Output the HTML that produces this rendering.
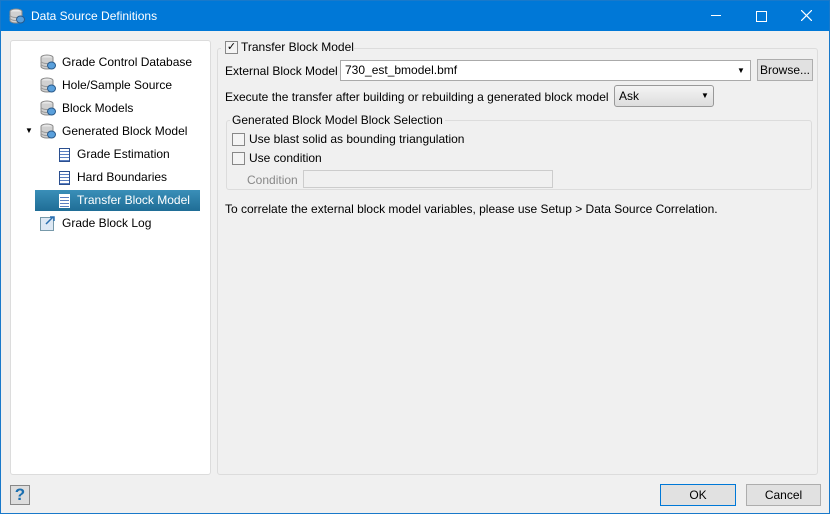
<!DOCTYPE html><html><head><style>
body{margin:0;width:830px;height:514px;overflow:hidden;font-family:"Liberation Sans",sans-serif;font-size:12px;color:#000}
.win{position:absolute;left:0;top:0;width:828px;height:512px;border:1px solid #1979ca;background:#f0f0f0}
.title{position:absolute;left:0;top:0;width:828px;height:30px;background:#0078d7;color:#fff;font-size:12px}
.abs{position:absolute}
.cb{position:absolute;width:11px;height:11px;border:1px solid #888;background:#f4f4f4}
.item{position:absolute;height:20px;line-height:20px;white-space:nowrap}
.doc{position:absolute;width:9px;height:12px;border:1px solid #2b4f8f;background:repeating-linear-gradient(#fff 0 2px,#5b7fc0 2px 3px)}
</style></head><body>
<svg width="0" height="0" style="position:absolute"><defs><g id="db"><ellipse cx="7" cy="3.5" rx="6" ry="2.5" fill="#e8e8e8" stroke="#8a8a8a"/><path d="M1 3.5v9c0 1.4 2.7 2.5 6 2.5s6-1.1 6-2.5v-9" fill="#d0d0d0" stroke="#8a8a8a"/><path d="M1 7c0 1.4 2.7 2.5 6 2.5s6-1.1 6-2.5M1 10c0 1.4 2.7 2.5 6 2.5" fill="none" stroke="#999"/><ellipse cx="11.5" cy="11.5" rx="4" ry="3.5" fill="#5aa0dc" stroke="#2a5a8a"/></g></defs></svg>
<div class="win">
<div class="title">
<svg class="abs" style="left:8px;top:7px" width="17" height="17"><use href="#db"/></svg>
<div class="abs" style="left:30px;top:8px">Data Source Definitions</div>
<div class="abs" style="left:710px;top:14px;width:10px;height:1px;background:#fff"></div>
<div class="abs" style="left:755px;top:10px;width:9px;height:9px;border:1px solid #fff"></div>
<svg class="abs" style="left:800px;top:9px" width="11" height="11"><path d="M0 0L11 11M11 0L0 11" stroke="#fff" stroke-width="1.2"/></svg>
</div>
<div class="abs" style="left:9px;top:39px;width:199px;height:433px;background:#fff;border:1px solid #dcdcdc;border-radius:3px"></div>
<div class="abs" style="left:216px;top:47px;width:599px;height:425px;border:1px solid #dcdcdc;border-radius:3px"></div>
<div class="abs" style="left:34px;top:189px;width:165px;height:21px;background:linear-gradient(#3a8fb8,#1f6d96)"></div>
<svg class="abs" style="left:39px;top:53px" width="17" height="17"><use href="#db"/></svg>
<div class="item" style="left:61px;top:51px">Grade Control Database</div>
<svg class="abs" style="left:39px;top:76px" width="17" height="17"><use href="#db"/></svg>
<div class="item" style="left:61px;top:74px">Hole/Sample Source</div>
<svg class="abs" style="left:39px;top:99px" width="17" height="17"><use href="#db"/></svg>
<div class="item" style="left:61px;top:97px">Block Models</div>
<div class="item" style="left:24px;top:120px;font-size:8px">▼</div>
<svg class="abs" style="left:39px;top:122px" width="17" height="17"><use href="#db"/></svg>
<div class="item" style="left:61px;top:120px">Generated Block Model</div>
<div class="doc" style="left:58px;top:147px"></div>
<div class="item" style="left:76px;top:143px">Grade Estimation</div>
<div class="doc" style="left:58px;top:170px"></div>
<div class="item" style="left:76px;top:166px">Hard Boundaries</div>
<div class="doc" style="left:58px;top:193px;border-color:#fff"></div>
<div class="item" style="left:76px;top:189px;color:#fff">Transfer Block Model</div>
<svg class="abs" style="left:39px;top:214px" width="17" height="17"><rect x="0.5" y="2.5" width="13" height="13" fill="#dde8f4" stroke="#79a"/><path d="M6 9L13 2M10 2h4v4" stroke="#2a6fb0" stroke-width="1.5" fill="none"/></svg>
<div class="item" style="left:61px;top:212px">Grade Block Log</div>

<div class="abs" style="left:220px;top:40px;width:133px;height:14px;background:#f0f0f0"></div>
<div class="cb" style="left:224px;top:40px;font-size:11px;line-height:11px;text-align:center">✓</div>
<div class="item" style="left:240px;top:36px">Transfer Block Model</div>
<div class="item" style="left:224px;top:60px">External Block Model</div>
<div class="abs" style="left:339px;top:59px;width:409px;height:19px;background:#fff;border:1px solid #aaa"></div>
<div class="item" style="left:344px;top:59px">730_est_bmodel.bmf</div>
<div class="abs" style="left:736px;top:65px;font-size:8px">▼</div>
<div class="abs" style="left:756px;top:58px;width:54px;height:20px;border:1px solid #adadad;background:#e1e1e1;text-align:center;line-height:20px">Browse...</div>
<div class="item" style="left:224px;top:86px">Execute the transfer after building or rebuilding a generated block model</div>
<div class="abs" style="left:613px;top:84px;width:98px;height:20px;border:1px solid #999;border-radius:3px;background:linear-gradient(#f4f4f4,#ddd)"></div>
<div class="item" style="left:618px;top:85px">Ask</div>
<div class="abs" style="left:700px;top:90px;font-size:8px">▼</div>
<div class="abs" style="left:225px;top:119px;width:584px;height:68px;border:1px solid #dcdcdc;border-radius:3px"></div>
<div class="item" style="left:229px;top:109px;background:#f0f0f0;padding:0 2px">Generated Block Model Block Selection</div>
<div class="cb" style="left:231px;top:132px"></div>
<div class="item" style="left:248px;top:128px">Use blast solid as bounding triangulation</div>
<div class="cb" style="left:231px;top:151px"></div>
<div class="item" style="left:248px;top:147px">Use condition</div>
<div class="item" style="left:246px;top:169px;color:#888">Condition</div>
<div class="abs" style="left:302px;top:169px;width:248px;height:16px;border:1px solid #ccc;background:#f0f0f0"></div>
<div class="item" style="left:224px;top:198px">To correlate the external block model variables, please use Setup &gt; Data Source Correlation.</div>

<div class="abs" style="left:9px;top:484px;width:18px;height:18px;border:1px solid #888;background:#ddd;color:#1a6fb0;font-weight:bold;font-size:17px;text-align:center;line-height:18px">?</div>
<div class="abs" style="left:659px;top:483px;width:74px;height:20px;border:1px solid #0078d7;background:#e1e1e1;text-align:center;line-height:20px">OK</div>
<div class="abs" style="left:745px;top:483px;width:73px;height:20px;border:1px solid #adadad;background:#e1e1e1;text-align:center;line-height:20px">Cancel</div>
</div></body></html>
